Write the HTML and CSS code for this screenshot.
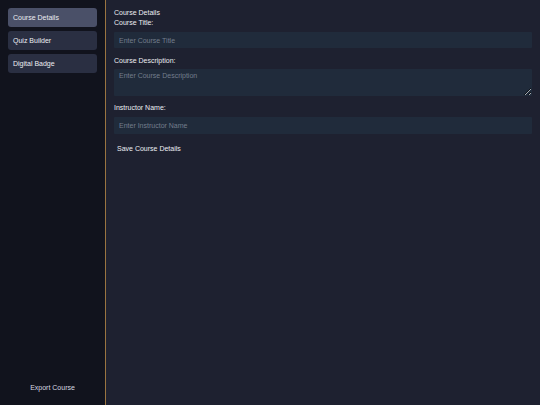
FILE: index.html
```html
<!DOCTYPE html>
<html lang="en">
<head>
<meta charset="utf-8">
<title>Course Builder</title>
<link rel="stylesheet" href="styles.css">
</head>
<body>
<div class="app">
  <aside class="sidebar">
    <nav class="nav">
      <button class="nav-btn active">Course Details</button>
      <button class="nav-btn">Quiz Builder</button>
      <button class="nav-btn">Digital Badge</button>
    </nav>
    <button class="export-btn">Export Course</button>
  </aside>
  <main class="main">
    <div class="section-title">Course Details</div>
    <div class="field">
      <label class="label">Course Title:</label>
      <input class="input" type="text" placeholder="Enter Course Title">
    </div>
    <div class="field">
      <label class="label">Course Description:</label>
      <textarea class="input textarea" placeholder="Enter Course Description"></textarea>
    </div>
    <div class="field">
      <label class="label">Instructor Name:</label>
      <input class="input" type="text" placeholder="Enter Instructor Name">
    </div>
    <button class="save-btn">Save Course Details</button>
  </main>
</div>
</body>
</html>
```

FILE: styles.css
```css
* { box-sizing: border-box; }
html, body {
  margin: 0;
  height: 100%;
  background: #1e2130;
  font-family: "Liberation Sans", Arial, sans-serif;
  font-size: 7px;
  color: #eceef2;
}
.app {
  display: flex;
  height: 405px;
}
.sidebar {
  width: 106px;
  flex: none;
  background: #11131d;
  border-right: 1px solid #9a7440;
  padding: 8px 8px 10px 8px;
  display: flex;
  flex-direction: column;
  justify-content: space-between;
}
.nav {
  display: flex;
  flex-direction: column;
  gap: 4.5px;
}
.nav-btn {
  display: block;
  width: 89px;
  height: 18.5px;
  border: none;
  border-radius: 3px;
  background: #2a2f42;
  color: #eceef2;
  font-family: inherit;
  font-size: 7px;
  text-align: left;
  padding: 0 5px;
}
.nav-btn.active {
  background: #4a5068;
}
.export-btn {
  background: transparent;
  border: none;
  color: #d6d8e0;
  font-family: inherit;
  font-size: 7px;
  height: 16px;
  padding: 0;
  text-align: center;
}
.main {
  flex: 1;
  padding: 9px 8px 8px 8px;
}
.section-title {
  line-height: 8px;
  margin-bottom: 2px;
}
.field {
  margin-bottom: 8.3px;
}
.label {
  display: block;
  line-height: 8px;
  margin-bottom: 4.7px;
}
.input {
  display: block;
  width: 100%;
  height: 16.7px;
  border: none;
  border-radius: 1px;
  background: #202b3b;
  color: #eceef2;
  font-family: inherit;
  font-size: 7px;
  padding: 0 5px;
  outline: none;
}
.input::placeholder {
  color: #737d8c;
}
.textarea {
  height: 26.7px;
  padding: 3px 5px;
  resize: vertical;
}
.save-btn {
  background: transparent;
  border: none;
  color: #eceef2;
  font-family: inherit;
  font-size: 7px;
  padding: 3px 3px;
  margin-top: 0;
}
```
